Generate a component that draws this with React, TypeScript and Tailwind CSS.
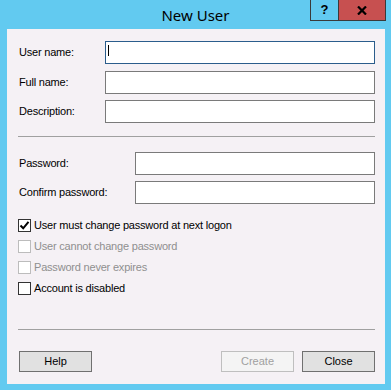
import React from "react";

const font = { fontFamily: '"Liberation Sans", Arial, sans-serif' };

function Field({ label, inputLeft, focused, top }: { label: string; inputLeft: number; focused?: boolean; top: string }) {
  return (
    <div className={`flex items-center h-[23px] ${top}`}>
      <span className="pl-[12px] text-[11px] tracking-[-0.2px] text-black" style={{ width: inputLeft }}>
        {label}
      </span>
      <div
        className={`relative flex-1 h-[23px] bg-white border ${
          focused ? "border-[#2b5d8c]" : "border-[#7a7a7a]"
        }`}
      >
        {focused && <div className="absolute left-[2px] top-[3px] w-px h-[11px] bg-black"></div>}
      </div>
    </div>
  );
}

function Check({ label, checked, disabled }: { label: string; checked?: boolean; disabled?: boolean }) {
  return (
    <div className="flex items-center h-[21px] pl-[11px]">
      <div
        className={`w-[13px] h-[13px] bg-white border flex items-center justify-center ${
          disabled ? "border-[#bcbcbc]" : "border-[#333333]"
        }`}
      >
        {checked && (
          <svg width="11" height="11" viewBox="0 0 11 11">
            <path d="M1.5 5.5 L4.2 8.3 L9.5 1.8" fill="none" stroke="#000" strokeWidth="2" />
          </svg>
        )}
      </div>
      <span className={`ml-[3px] text-[11px] tracking-[-0.2px] ${disabled ? "text-[#8f8f8f]" : "text-black"}`}>
        {label}
      </span>
    </div>
  );
}

function Btn({ label, disabled, ml }: { label: string; disabled?: boolean; ml?: string }) {
  return (
    <div
      className={`w-[73px] h-[21px] flex items-center justify-center text-[11px] border ${ml ?? ""} ${
        disabled ? "bg-[#f4f4f4] border-[#bfbfbf] text-[#a0a0a0]" : "bg-[#e1e1e1] border-[#707070] text-black"
      }`}
    >
      {label}
    </div>
  );
}

export default function App() {
  return (
    <div className="w-[391px] h-[390px] bg-[#62caf0] flex flex-col" style={font}>
      <div className="relative h-[29px] flex justify-center">
        <span
          className="mt-[4px] text-[15px] text-black"
          style={{ fontFamily: '"Noto Sans", "Open Sans", sans-serif' }}
        >
          New User
        </span>
        <div className="absolute top-0 right-[5px] flex h-[21px] border border-t-0 border-[#3a3a3a]">
          <div className="w-[28px] flex items-center justify-center text-[13px] font-bold border-r border-[#3a3a3a]">
            ?
          </div>
          <div className="w-[46px] bg-[#c75050] flex items-center justify-center">
            <svg width="10" height="9" viewBox="0 0 10 9">
              <path d="M1 0.5 L9 8.5 M9 0.5 L1 8.5" stroke="#000" strokeWidth="2.2" />
            </svg>
          </div>
        </div>
      </div>
      <div className="ml-[7px] mr-[6px] h-[355px] bg-[#f5f1f5] flex flex-col pr-[10px]">
        <Field label="User name:" inputLeft={98} focused top="mt-[12px]" />
        <Field label="Full name:" inputLeft={98} top="mt-[7px]" />
        <Field label="Description:" inputLeft={98} top="mt-[6px]" />
        <div className="ml-[11px] mt-[13px] h-px bg-[#a0a0a0]"></div>
        <Field label="Password:" inputLeft={128} top="mt-[15px]" />
        <Field label="Confirm password:" inputLeft={128} top="mt-[6px]" />
        <div className="mt-[11px] flex flex-col">
          <Check label="User must change password at next logon" checked />
          <Check label="User cannot change password" disabled />
          <Check label="Password never expires" disabled />
          <Check label="Account is disabled" />
        </div>
        <div className="ml-[11px] mt-[30px] h-px bg-[#a0a0a0]"></div>
        <div className="flex mt-[21px] pl-[12px]">
          <Btn label="Help" />
          <div className="flex-1"></div>
          <Btn label="Create" disabled />
          <Btn label="Close" ml="ml-[8px]" />
        </div>
      </div>
    </div>
  );
}
